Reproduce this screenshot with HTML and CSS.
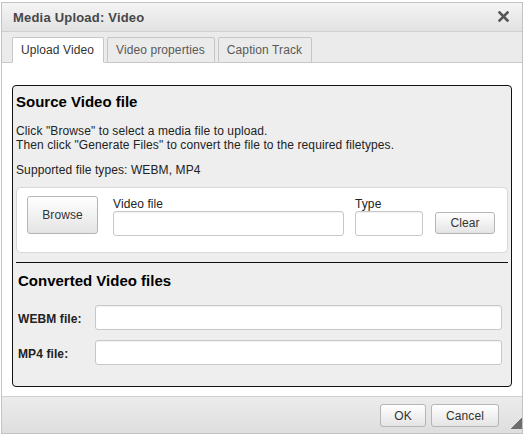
FILE: index.html
```html
<!DOCTYPE html>
<html>
<head>
<meta charset="utf-8">
<title>Media Upload: Video</title>
<link rel="stylesheet" href="styles.css">
</head>
<body>
<div class="dialog">
  <div class="titlebar">
    <span class="title">Media Upload: Video</span>
    <span class="close"><svg width="11" height="11" viewBox="0 0 11 11"><path d="M1.5 1.5 L9.5 9.5 M9.5 1.5 L1.5 9.5" stroke="#555" stroke-width="2.6" stroke-linecap="square"/></svg></span>
  </div>
  <div class="tabs">
    <div class="tab active">Upload Video</div>
    <div class="tab">Video properties</div>
    <div class="tab">Caption Track</div>
  </div>
  <div class="content">
    <div class="fieldset">
      <div class="source">
        <h2 class="heading">Source Video file</h2>
        <p class="help">Click "Browse" to select a media file to upload.<br>Then click "Generate Files" to convert the file to the required filetypes.</p>
        <p class="types">Supported file types: WEBM, MP4</p>
        <div class="picker">
          <button class="btn browse">Browse</button>
          <div class="field file"><label class="field-label">Video file</label><input class="input" type="text"></div>
          <div class="field type"><label class="field-label">Type</label><input class="input" type="text"></div>
          <button class="btn clear">Clear</button>
        </div>
      </div>
      <div class="divider"></div>
      <div class="converted">
        <h2 class="heading">Converted Video files</h2>
        <div class="row"><label class="row-label">WEBM file:</label><input class="input wide" type="text"></div>
        <div class="row"><label class="row-label">MP4 file:</label><input class="input wide" type="text"></div>
      </div>
    </div>
  </div>
  <div class="footer">
    <button class="btn ok">OK</button>
    <button class="btn cancel">Cancel</button>
    <span class="grip"></span>
  </div>
</div>
</body>
</html>
```
FILE: styles.css
```css
html, body {
  margin: 0;
  padding: 0;
  background: #ffffff;
}
body {
  font-family: "Liberation Sans", Arial, sans-serif;
  font-size: 12px;
  letter-spacing: 0.1px;
  color: #222;
}
.dialog {
  box-sizing: border-box;
  width: 522px;
  margin: 2px 0 0 1px;
  border: 1px solid #c3c3c3;
  background: #fff;
}
.titlebar {
  height: 28px;
  border-bottom: 1px solid #cfcfcf;
  background: linear-gradient(#f4f4f4, #e2e2e2);
  display: flex;
  align-items: center;
  justify-content: space-between;
  padding: 0 13px 0 11px;
}
.title {
  font-size: 13px;
  font-weight: bold;
  letter-spacing: 0.2px;
  color: #474747;
  line-height: 27px;
  padding-top: 1px;
}
.close {
  display: flex;
  width: 11px;
  height: 11px;
  margin-top: -1px;
}
.tabs {
  height: 25px;
  padding: 5px 0 0 10px;
  background: #ebebeb;
  border-bottom: 1px solid #cacaca;
  display: flex;
  align-items: flex-end;
  gap: 3px;
}
.tab {
  box-sizing: border-box;
  height: 26px;
  margin-bottom: -1px;
  padding: 0 9px 0 8px;
  line-height: 24px;
  border: 1px solid #c6c6c6;
  border-radius: 2px 2px 0 0;
  background: #ebebeb;
  color: #595959;
  font-size: 12px;
}
.tab.active {
  background: #fff;
  border-bottom-color: #fff;
  color: #333;
}
.content {
  background: #fff;
  padding: 22px 10px 9px 10px;
}
.fieldset {
  border: 1px solid #111;
  border-radius: 4px;
  background: #eeeeee;
  padding: 0 3px 21px 3px;
}
.source {
  padding-top: 7px;
}
.heading {
  margin: 0;
  font-size: 15px;
  line-height: 18px;
  font-weight: bold;
  letter-spacing: 0;
  color: #000;
}
.help {
  margin: 13px 0 0 0;
  line-height: 14px;
  color: #222;
}
.types {
  margin: 11px 0 0 0;
  line-height: 14px;
  color: #222;
}
.picker {
  box-sizing: border-box;
  height: 66px;
  margin-top: 10px;
  border: 1px solid #d8d8d8;
  border-radius: 5px;
  background: #fff;
  display: flex;
  align-items: flex-start;
  padding: 8px 12px 0 10px;
}
.btn {
  box-sizing: border-box;
  font-family: "Liberation Sans", Arial, sans-serif;
  font-size: 12px;
  letter-spacing: 0.1px;
  color: #333;
  border: 1px solid #b5b5b5;
  border-radius: 3px;
  background: linear-gradient(#ffffff, #e4e4e4);
  padding: 0;
  margin: 0;
}
.browse {
  width: 71px;
  height: 38px;
  margin-right: 15px;
}
.field {
  display: flex;
  flex-direction: column;
  padding-top: 1px;
}
.field.file {
  width: 231px;
  margin-right: 11px;
}
.field.type {
  width: 68px;
  margin-right: 12px;
}
.field-label {
  line-height: 14px;
  color: #222;
}
.input {
  box-sizing: border-box;
  height: 25px;
  width: 100%;
  margin: 0;
  border: 1px solid #c8c8c8;
  border-radius: 3px;
  background: #fff;
  box-shadow: inset 0 1px 1px rgba(0, 0, 0, 0.06);
}
.clear {
  width: 60px;
  height: 22px;
  margin-top: 16px;
}
.divider {
  height: 1px;
  background: #111;
  margin-top: 9px;
}
.converted {
  padding-left: 2px;
}
.converted .heading {
  margin-top: 9px;
}
.row {
  display: flex;
  align-items: center;
  height: 25px;
  margin-top: 10px;
}
.converted .heading + .row {
  margin-top: 15px;
}
.row-label {
  width: 77px;
  font-weight: bold;
  line-height: 14px;
  padding-top: 2px;
  color: #222;
}
.input.wide {
  width: 407px;
}
.footer {
  position: relative;
  height: 29px;
  padding: 7px 23px 0 0;
  border-top: 1px solid #cfcfcf;
  background: linear-gradient(#ececec, #dedede);
  display: flex;
  justify-content: flex-end;
  align-items: flex-start;
  gap: 5px;
}
.ok {
  width: 46px;
  height: 23px;
}
.cancel {
  width: 68px;
  height: 23px;
}
.grip {
  position: absolute;
  right: 0;
  bottom: 4px;
  width: 11px;
  height: 11px;
  background: linear-gradient(135deg, transparent 50%, #6e6e6e 50%);
}
```
